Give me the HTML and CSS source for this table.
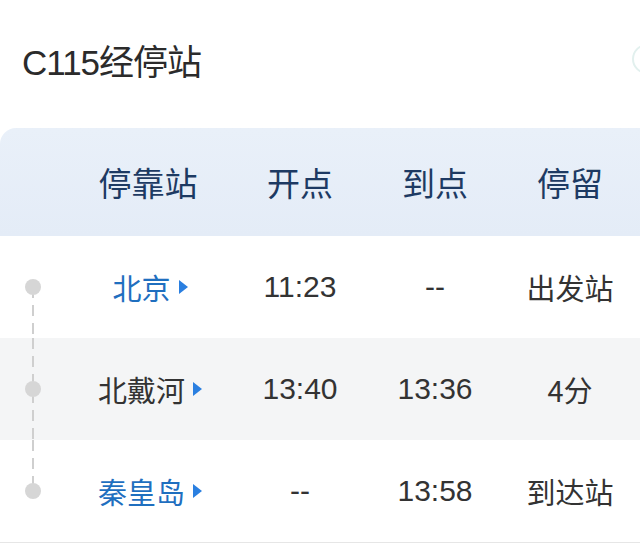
FILE: index.html
```html
<!DOCTYPE html>
<html lang="zh">
<head>
<meta charset="utf-8">
<link rel="stylesheet" href="styles.css">
</head>
<body>
<div class="page">
  <div class="title-bar">
    <h1 class="title">C115经停站</h1>
    <span class="side-ring"></span>
  </div>
  <div class="table">
    <div class="thead">
      <div class="cell"></div>
      <div class="cell">停靠站</div>
      <div class="cell">开点</div>
      <div class="cell">到点</div>
      <div class="cell">停留</div>
    </div>
    <div class="row first">
      <div class="cell track"><span class="dot"></span></div>
      <div class="cell station link">北京<span class="arrow"></span></div>
      <div class="cell">11:23</div>
      <div class="cell">--</div>
      <div class="cell">出发站</div>
    </div>
    <div class="row mid alt">
      <div class="cell track"><span class="dot"></span></div>
      <div class="cell station">北戴河<span class="arrow"></span></div>
      <div class="cell">13:40</div>
      <div class="cell">13:36</div>
      <div class="cell">4分</div>
    </div>
    <div class="row last">
      <div class="cell track"><span class="dot"></span></div>
      <div class="cell station link">秦皇岛<span class="arrow"></span></div>
      <div class="cell">--</div>
      <div class="cell">13:58</div>
      <div class="cell">到达站</div>
    </div>
  </div>
</div>
</body>
</html>
```

FILE: styles.css
```css
* { box-sizing: border-box; }
html, body { margin: 0; padding: 0; background: #ffffff; }
body {
  font-family: "Liberation Sans", "Noto Sans CJK SC", sans-serif;
  color: #333333;
  width: 640px;
  height: 546px;
  overflow: hidden;
}
.page { width: 640px; }
.title-bar {
  position: relative;
  height: 128px;
  display: flex;
  align-items: center;
  padding: 0 0 4px 22px;
}
.title {
  margin: 0;
  font-family: "Liberation Sans", "Noto Sans CJK SC", sans-serif;
  font-weight: 400;
  font-size: 35px;
  line-height: 1;
  color: #2b2b2b;
  letter-spacing: -1px;
}
.side-ring {
  position: absolute;
  right: -22px;
  top: 44px;
  width: 30px;
  height: 30px;
  border-radius: 50%;
  border: 2px solid #e2f0ee;
}
.table { width: 640px; }
.thead, .row {
  display: grid;
  grid-template-columns: 66px 164px 140px 130px 140px;
  align-items: stretch;
}
.thead {
  height: 108px;
  background: linear-gradient(180deg, #e9f0f9 0%, #e4ecf7 100%);
  border-top-left-radius: 16px;
  color: #1d3a63;
  font-size: 33px;
  font-family: "Noto Sans CJK SC", sans-serif;
}
.cell {
  display: flex;
  align-items: center;
  justify-content: center;
  position: relative;
}
.row {
  height: 102px;
  font-size: 30px;
  color: #333333;
}
.row.alt { background: #f4f5f6; }
.row.last { border-bottom: 1px solid #e6e6e6; height: 103px; }
.station {
  font-family: "Noto Sans CJK SC", sans-serif;
  font-size: 29px;
  padding-left: 4px;
}
.station.link { color: #1f6fbf; }
.row .cell:nth-child(5) { font-family: "Noto Sans CJK SC", sans-serif; font-size: 29px; }
.arrow {
  display: inline-block;
  width: 0;
  height: 0;
  margin-left: 8px;
  border-top: 7px solid transparent;
  border-bottom: 7px solid transparent;
  border-left: 9px solid #2a7fe0;
}
.dot {
  width: 16px;
  height: 16px;
  border-radius: 50%;
  background: #d6d6d6;
  position: relative;
  z-index: 1;
}
.track::before {
  content: "";
  position: absolute;
  left: 32px;
  width: 2px;
  top: 0;
  bottom: 0;
  background: repeating-linear-gradient(180deg, #cfcfcf 0 11px, transparent 11px 18px);
}
.row.first .track::before { top: 50%; }
.row.last .track::before { bottom: 50%; }
```
